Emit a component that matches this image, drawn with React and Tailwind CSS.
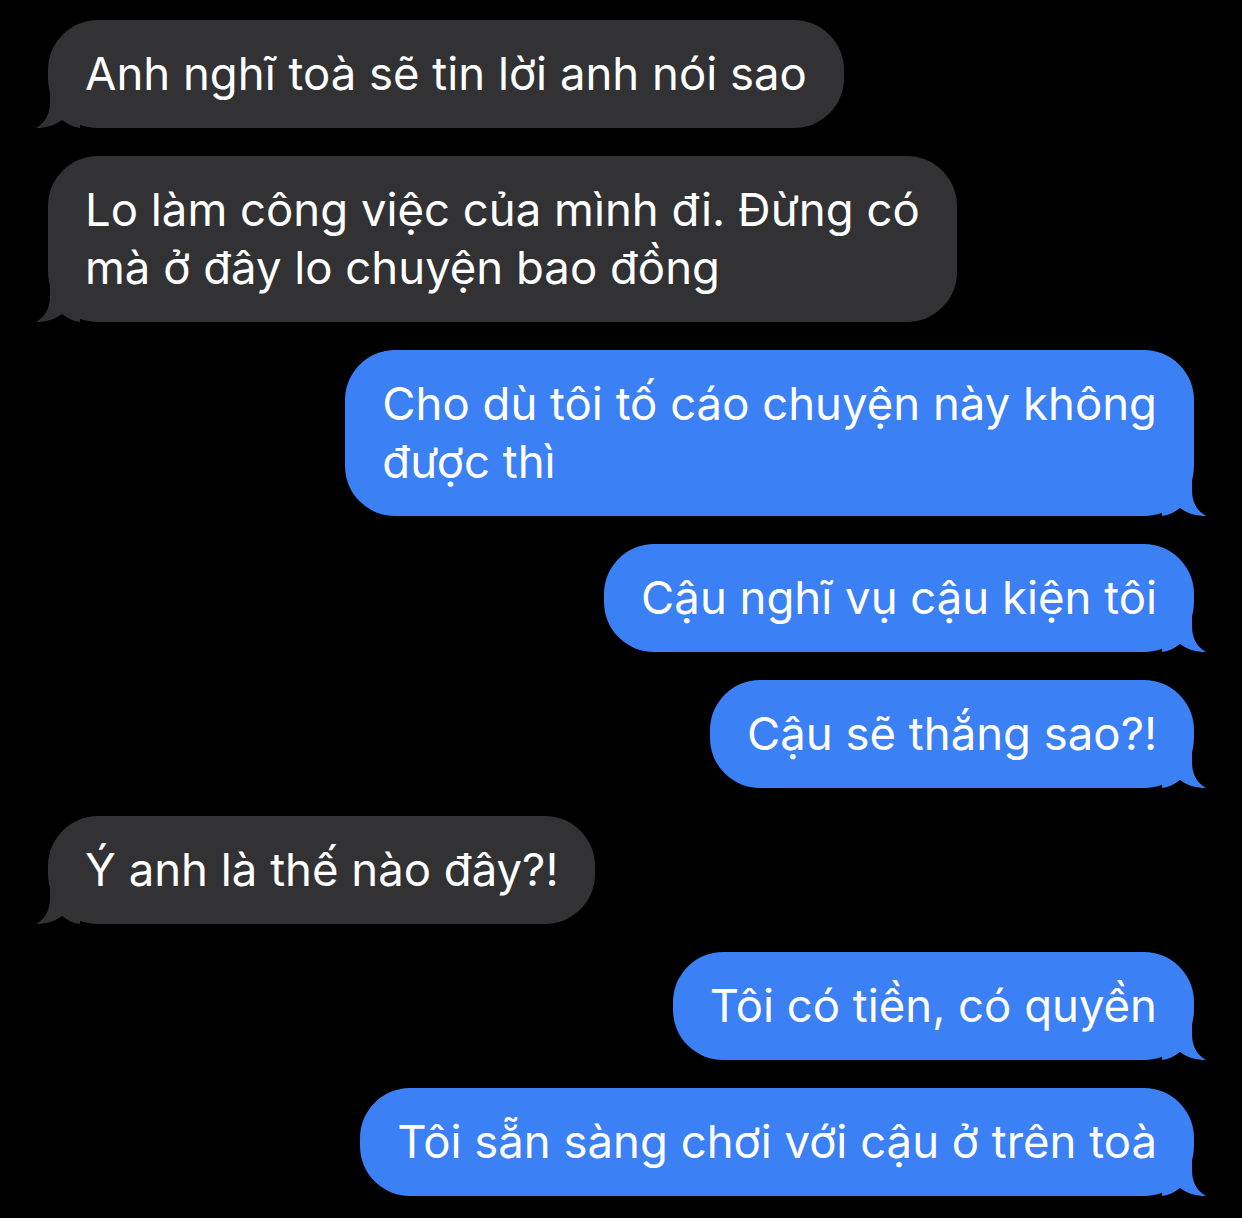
const MESSAGES = [
  { from: 'them', lines: ['Anh nghĩ toà sẽ tin lời anh nói sao'] },
  { from: 'them', lines: ['Lo làm công việc của mình đi. Đừng có', 'mà ở đây lo chuyện bao đồng'] },
  { from: 'me', lines: ['Cho dù tôi tố cáo chuyện này không', 'được thì'] },
  { from: 'me', lines: ['Cậu nghĩ vụ cậu kiện tôi'] },
  { from: 'me', lines: ['Cậu sẽ thắng sao?!'] },
  { from: 'them', lines: ['Ý anh là thế nào đây?!'] },
  { from: 'me', lines: ['Tôi có tiền, có quyền'] },
  { from: 'me', lines: ['Tôi sẵn sàng chơi với cậu ở trên toà'] },
]

function Tail({ side, color }) {
  const cls = side === 'left' ? '-left-[12px]' : '-right-[12px] -scale-x-100'
  return (
    <svg
      className={`absolute bottom-0 ${cls}`}
      width="44"
      height="42"
      viewBox="0 0 44 42"
    >
      <path
        d="M14 0 L14 16 C14 28 9 37 0 42 C9 42 18 40 26 34 C31 38 37 41 44 42 L44 0 Z"
        fill={color}
      />
    </svg>
  )
}

function Bubble({ from, lines }) {
  const mine = from === 'me'
  const color = mine ? '#3b80f4' : '#323234'
  return (
    <div
      className={`relative rounded-[50px] px-[37px] py-[25px] text-white ${
        mine ? 'self-end bg-[#3b80f4]' : 'self-start bg-[#323234]'
      }`}
    >
      <Tail side={mine ? 'right' : 'left'} color={color} />
      <p className="relative text-[45.5px] leading-[58px] whitespace-nowrap">
        {lines.map((l, i) => (
          <span key={i} className="block">
            {l}
          </span>
        ))}
      </p>
    </div>
  )
}

export default function App() {
  return (
    <div
      className="w-[1242px] h-[1218px] bg-black flex flex-col gap-[28px] px-[48px] pt-[20px] overflow-hidden"
      style={{ fontFamily: 'Inter, "Noto Sans", sans-serif' }}
    >
      {MESSAGES.map((m, i) => (
        <Bubble key={i} {...m} />
      ))}
    </div>
  )
}
